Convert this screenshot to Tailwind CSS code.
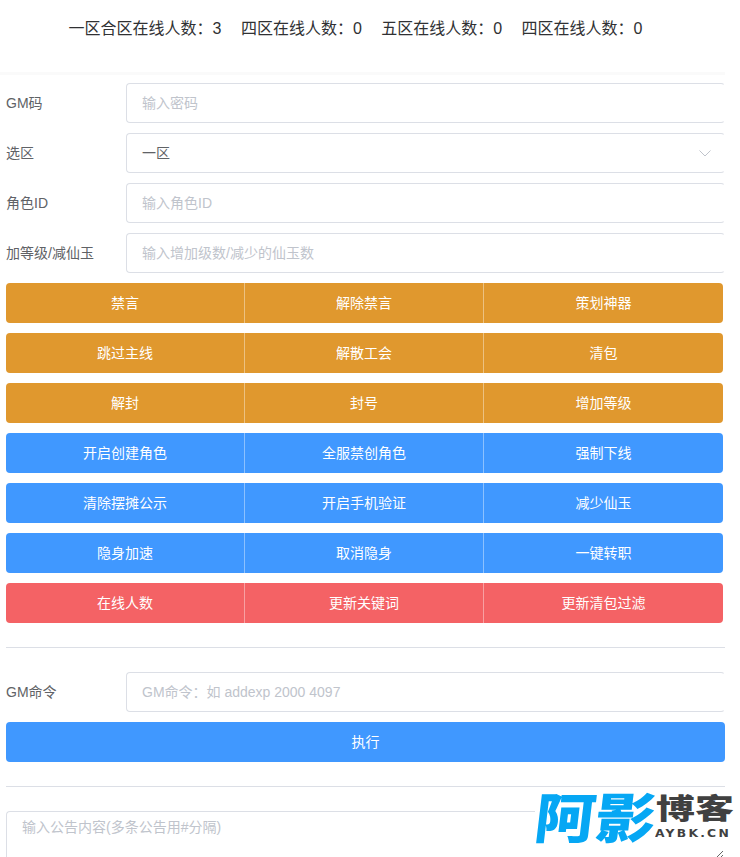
<!DOCTYPE html>
<html lang="zh">
<head>
  <meta charset="UTF-8" />
  <title>GM</title>
  <script src="https://cdn.jsdelivr.net/npm/@tailwindcss/browser@4"></script>
</head>
<body class="bg-white overflow-hidden h-[857px] font-['Liberation_Sans','Noto_Sans_CJK_SC',sans-serif] text-sm text-[#606266]">

  <!-- online counts -->
  <div class="h-[72px] w-[711px] pt-[18px] flex justify-center gap-[19.4px] text-base leading-[21px] text-[#303133]">
    <span>一区合区在线人数：3</span>
    <span>四区在线人数：0</span>
    <span>五区在线人数：0</span>
    <span>四区在线人数：0</span>
  </div>

  <div class="h-[3px] w-[725px] bg-[#fafafa]"></div>

  <form class="pt-2 flex flex-col">
    <div class="flex items-center h-10 mb-2.5">
      <label class="w-[126px] pl-1.5">GM码</label>
      <input class="w-[599px] h-10 border border-[#dcdfe6] border-r-transparent rounded px-[15px] placeholder:text-[#c0c4cc]" placeholder="输入密码" />
    </div>
    <div class="flex items-center h-10 mb-2.5">
      <label class="w-[126px] pl-1.5">选区</label>
      <div class="w-[599px] h-10 border border-[#dcdfe6] border-r-transparent rounded px-[15px] flex items-center justify-between">
        <span>一区</span>
        <svg class="w-3.5 h-3.5 -mr-[3px] text-[#c0c4cc]" viewBox="0 0 14 14" fill="none" stroke="currentColor"><path d="M1.5 4.5 7 10l5.5-5.5" /></svg>
      </div>
    </div>
    <div class="flex items-center h-10 mb-2.5">
      <label class="w-[126px] pl-1.5">角色ID</label>
      <input class="w-[599px] h-10 border border-[#dcdfe6] border-r-transparent rounded px-[15px] placeholder:text-[#c0c4cc]" placeholder="输入角色ID" />
    </div>
    <div class="flex items-center h-10 mb-2.5">
      <label class="w-[126px] pl-1.5">加等级/减仙玉</label>
      <input class="w-[599px] h-10 border border-[#dcdfe6] border-r-transparent rounded px-[15px] placeholder:text-[#c0c4cc]" placeholder="输入增加级数/减少的仙玉数" />
    </div>

    <div class="pl-1.5 w-[723px] flex flex-col gap-2.5 text-white">
      <div class="grid grid-cols-3 h-10 rounded overflow-hidden bg-[#e0982e] divide-x divide-white/40">
        <button type="button">禁言</button><button type="button">解除禁言</button><button type="button">策划神器</button>
      </div>
      <div class="grid grid-cols-3 h-10 rounded overflow-hidden bg-[#e0982e] divide-x divide-white/40">
        <button type="button">跳过主线</button><button type="button">解散工会</button><button type="button">清包</button>
      </div>
      <div class="grid grid-cols-3 h-10 rounded overflow-hidden bg-[#e0982e] divide-x divide-white/40">
        <button type="button">解封</button><button type="button">封号</button><button type="button">增加等级</button>
      </div>
      <div class="grid grid-cols-3 h-10 rounded overflow-hidden bg-[#4098ff] divide-x divide-white/40">
        <button type="button">开启创建角色</button><button type="button">全服禁创角色</button><button type="button">强制下线</button>
      </div>
      <div class="grid grid-cols-3 h-10 rounded overflow-hidden bg-[#4098ff] divide-x divide-white/40">
        <button type="button">清除摆摊公示</button><button type="button">开启手机验证</button><button type="button">减少仙玉</button>
      </div>
      <div class="grid grid-cols-3 h-10 rounded overflow-hidden bg-[#4098ff] divide-x divide-white/40">
        <button type="button">隐身加速</button><button type="button">取消隐身</button><button type="button">一键转职</button>
      </div>
      <div class="grid grid-cols-3 h-10 rounded overflow-hidden bg-[#f46265] divide-x divide-white/40">
        <button type="button">在线人数</button><button type="button">更新关键词</button><button type="button">更新清包过滤</button>
      </div>
    </div>

    <div class="ml-1.5 w-[719px] h-px bg-[#dcdfe6] mt-6 mb-6"></div>

    <div class="flex items-center h-10 mb-2.5">
      <label class="w-[126px] pl-1.5">GM命令</label>
      <input class="w-[599px] h-10 border border-[#dcdfe6] border-r-transparent rounded px-[15px] placeholder:text-[#c0c4cc]" placeholder="GM命令：如 addexp 2000 4097" />
    </div>
    <div class="pl-1.5 w-[725px]">
      <button type="button" class="w-full h-10 rounded bg-[#4098ff] text-white">执行</button>
    </div>

    <div class="ml-1.5 w-[719px] h-px bg-[#dcdfe6] mt-6 mb-6"></div>

    <div class="pl-1.5 w-[725px]">
      <textarea class="block w-full h-[49px] border border-[#dcdfe6] border-r-transparent rounded px-[15px] py-[5px] leading-[21px] placeholder:text-[#c0c4cc]" placeholder="输入公告内容(多条公告用#分隔)"></textarea>
    </div>
  </form>

  <!-- watermark logo -->
  <div class="absolute left-[535px] top-[790px] w-[205px] h-[60px] bg-white flex items-start">
    <div class="w-[121px] h-[58px] font-['Noto_Sans_CJK_SC'] font-black text-[#06a7f4] text-[54px] leading-[50px] whitespace-nowrap origin-left scale-x-[1.12] -skew-x-6">阿影</div>
    <div class="w-[80px] flex flex-col text-[#404040] font-['Noto_Sans_CJK_SC'] font-black">
      <div class="h-[34px] text-[28px] leading-[34px] whitespace-nowrap origin-left scale-x-[1.39]">博客</div>
      <div class="h-[14px] mt-[3px] -ml-[1px] font-['DejaVu_Sans'] font-bold text-[11px] leading-[14px] tracking-[2px] whitespace-nowrap origin-left scale-x-[1.12]">AYBK.CN</div>
    </div>
  </div>

</body>
</html>
